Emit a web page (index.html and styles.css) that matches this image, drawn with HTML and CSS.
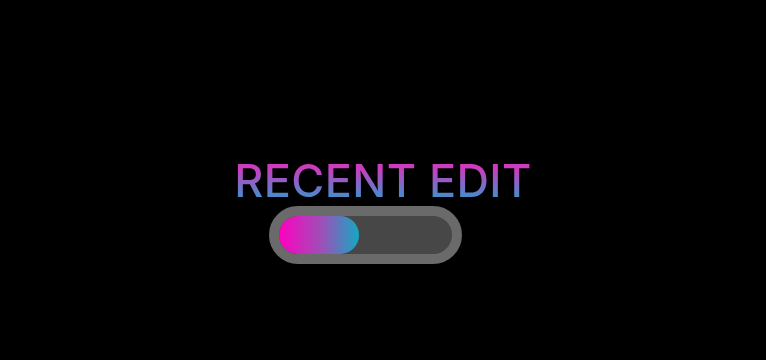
FILE: index.html
```html
<!DOCTYPE html>
<html>
<head>
  <title>Recent Edit</title>
  <link rel="stylesheet" href="styles.css">
</head>
<body>
  <div class="loader">
    <div class="title">RECENT EDIT</div>
    <div class="track">
      <div class="fill" style="width: 46%"></div>
    </div>
  </div>
</body>
</html>
```

FILE: styles.css
```css
body {
    margin: 0;
    background-color: #000;
    font-family: Inter, "Noto Sans", sans-serif;
    height: 360px;
    overflow: hidden;
    }

.loader {
    width: fit-content;
    margin: 0 auto;
    padding-top: 156px;
    }

.title {
    font-size: 45px;
    line-height: 50px;
    font-weight: 500;
    letter-spacing: 0.4px;
    background: linear-gradient(to bottom, #cc3cbe 25%, #4a8acb 80%);
    -webkit-background-clip: text;
    background-clip: text;
    color: transparent;
    }

.track {
    width: 173px;
    height: 38px;
    margin-left: 35px;
    border: 10px solid #6a6a6a;
    border-radius: 29px;
    background-color: #474747;
    }

.fill {
    height: 100%;
    border-radius: 19px;
    background: linear-gradient(to right, #ff00c0, #9a52b8 55%, #14a8c4);
    }
```
